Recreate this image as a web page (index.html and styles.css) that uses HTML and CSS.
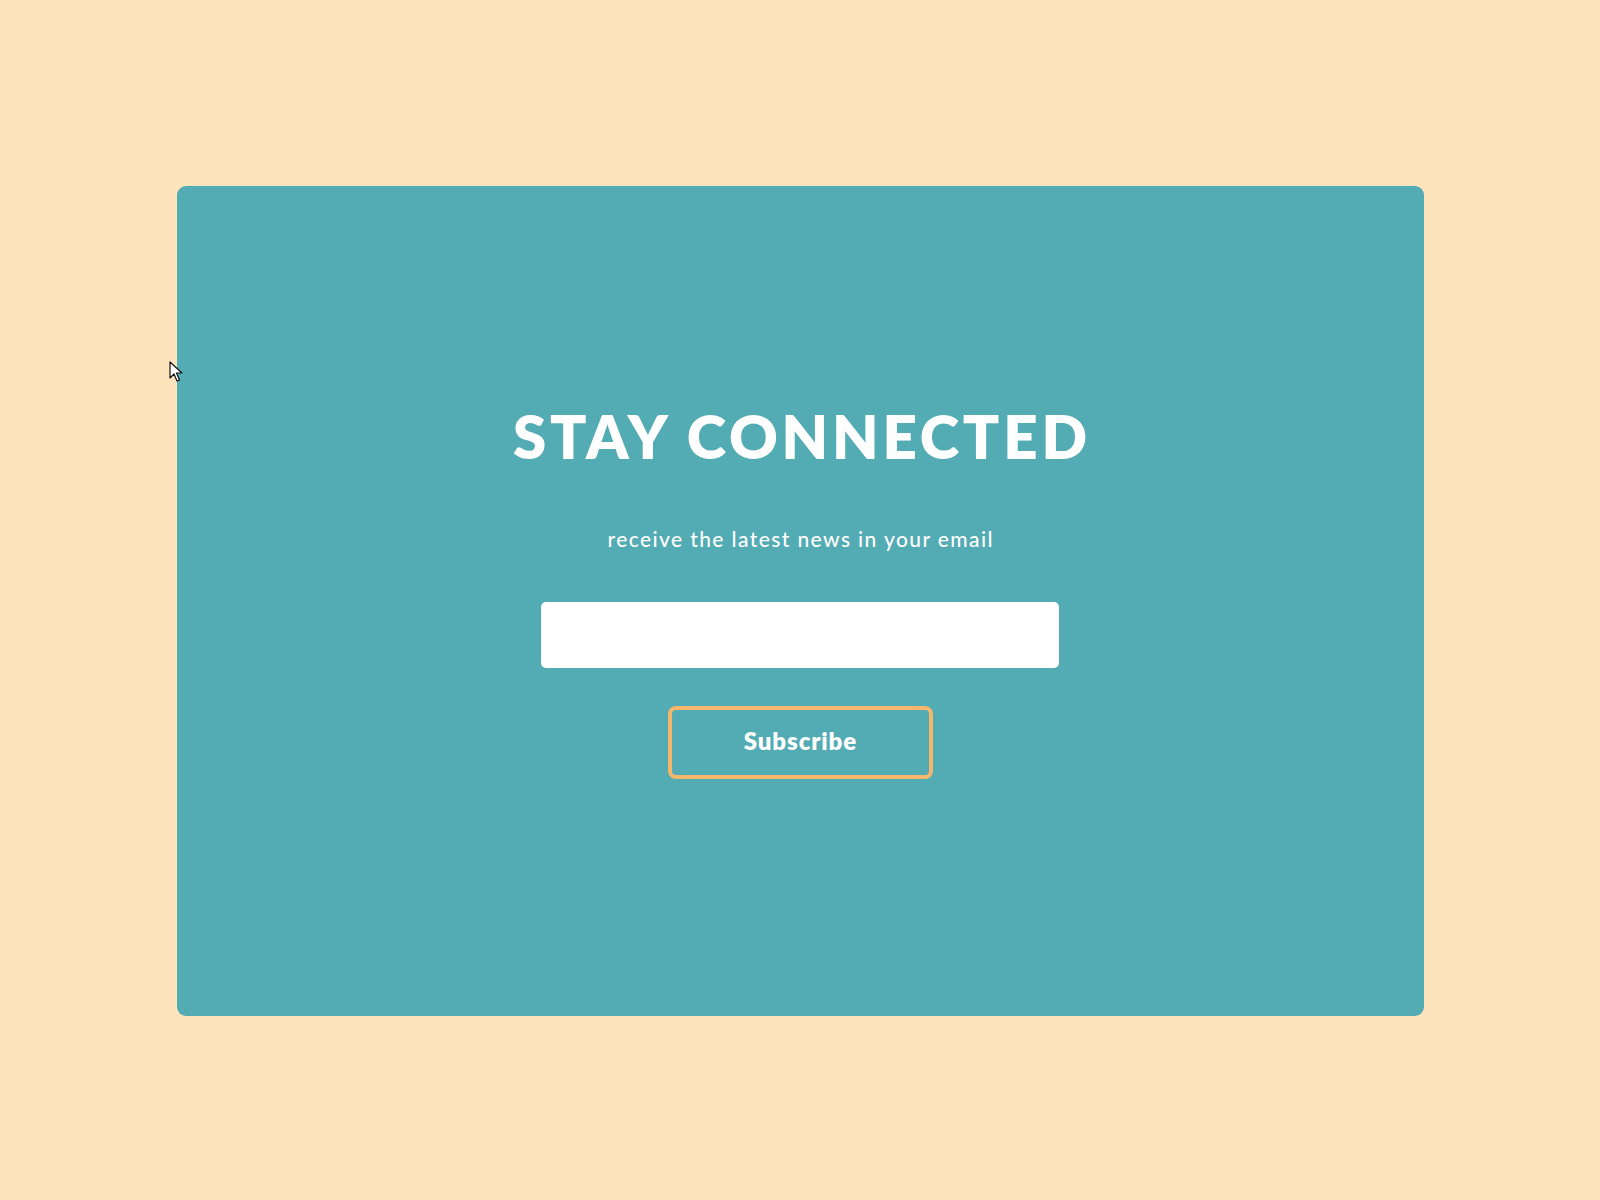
FILE: index.html
```html
<!DOCTYPE html>
<html>
<head>
<meta charset="utf-8">
<title>Stay Connected</title>
<link rel="stylesheet" href="styles.css">
</head>
<body>
<main class="card">
  <h1 class="title">STAY CONNECTED</h1>
  <p class="subtitle">receive the latest news in your email</p>
  <input class="email" type="email" aria-label="email">
  <button class="subscribe" type="button">Subscribe</button>
</main>
<svg class="cursor" width="14" height="22" viewBox="0 0 14 22" aria-hidden="true">
  <path d="M1 1 L1 17 L5 13 L8 20 L10.5 19 L7.5 12 L13 12 Z" fill="#ffffff" stroke="#111111" stroke-width="1.2" stroke-linejoin="round"/>
</svg>
</body>
</html>
```
FILE: styles.css
```css
html, body {
  margin: 0;
  padding: 0;
}
body {
  background: #fde4bd;
  width: 1600px;
  height: 1200px;
  font-family: "Lato", "Open Sans", sans-serif;
  position: relative;
  overflow: hidden;
  padding-top: 186px;
  box-sizing: border-box;
}
.card {
  width: 1247px;
  height: 830px;
  margin: 0 auto;
  background: #53abb4;
  border-radius: 9px;
  display: flex;
  flex-direction: column;
  align-items: center;
  justify-content: flex-start;
  color: #ffffff;
  box-sizing: border-box;
  padding-top: 220px;
}
.title {
  margin: 0;
  font-size: 60px;
  font-weight: 800;
  line-height: 60px;
  letter-spacing: 3.8px;
  padding-left: 3.8px;
}
.subtitle {
  margin: 59px 0 0;
  font-size: 21px;
  font-weight: 500;
  line-height: 28px;
  letter-spacing: 1.4px;
  padding-left: 1.4px;
}
.email {
  margin: 49px 0 0;
  width: 518px;
  height: 66px;
  box-sizing: border-box;
  border: none;
  border-radius: 5px;
  background: #ffffff;
  outline: none;
  padding: 0;
}
.subscribe {
  margin-top: 38px;
  width: 265px;
  height: 73px;
  box-sizing: border-box;
  background: transparent;
  border: 4px solid #f6b76d;
  border-radius: 8px;
  color: #ffffff;
  font-family: "Lato", "Open Sans", sans-serif;
  font-size: 24px;
  font-weight: 800;
  letter-spacing: 0.9px;
  padding: 0 0 4px 0.9px;
}
.cursor {
  position: absolute;
  left: 169px;
  top: 361px;
}
```
